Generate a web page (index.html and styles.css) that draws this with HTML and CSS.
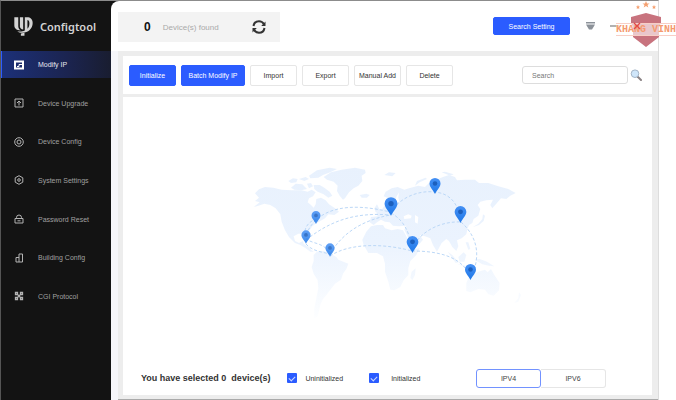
FILE: index.html
```html
<!DOCTYPE html>
<html lang="en">
<head>
    <meta charset="UTF-8">
    <meta name="viewport" content="width=device-width, initial-scale=1.0">
    <title>Configtool</title>
    <link rel="stylesheet" href="styles.css">
</head>
<body>
    <div class="window">
        <aside class="sidebar">
            <div class="brand">
                <svg class="brand-logo" viewBox="0 0 58 58" fill="#d4d4d4">
                    <path d="M1 1h12v27c0 6 3 10 8 13C8 41 1 35 1 26z"/>
                    <path d="M18 1h10v37c-6-1-10-4-10-10z"/>
                    <path d="M33 1h7c10 0 17 6 17 17 0 18-14 29-31 30-8 0-12-1-16-4 10 1 17 0 23-3zM41 36c4-4 6-10 6-17 0-6-2-9-6-10z"/>
                    <path d="M21 50l11-2v9H21z"/>
                </svg>
                <span>Configtool</span>
            </div>
            <nav class="menu">
                <a href="#" class="menu-item active">
                    <svg viewBox="0 0 10 10"><path d="M1 1.500h8v7H1z" stroke-width="2"/><path d="M3 6.500h2v-2h3"/></svg>
                    Modify IP
                </a>
                <a href="#" class="menu-item">
                    <svg viewBox="0 0 10 10"><path d="M1 1h8v8H1zM5 7.500V3M3 5l2-2 2 2"/></svg>
                    Device Upgrade
                </a>
                <a href="#" class="menu-item">
                    <svg viewBox="0 0 10 10"><circle cx="5" cy="5" r="4.300"/><circle cx="5" cy="5" r="2"/></svg>
                    Device Config
                </a>
                <a href="#" class="menu-item">
                    <svg viewBox="0 0 10 10"><path d="M5 .7l3.800 2.100v4.400L5 9.300 1.200 7.200V2.800z"/><circle cx="5" cy="5" r="1.300"/></svg>
                    System Settings
                </a>
                <a href="#" class="menu-item">
                    <svg viewBox="0 0 10 10"><path d="M1 4.500h8V9H1zM2.500 4.500V3.500a2.500 2.500 0 0 1 5 0v1M3.500 6.800h3"/></svg>
                    Password Reset
                </a>
                <a href="#" class="menu-item">
                    <svg viewBox="0 0 10 10"><path d="M5 9V1h3.500v8zM5 4.500H2V9h3"/></svg>
                    Building Config
                </a>
                <a href="#" class="menu-item">
                    <svg viewBox="0 0 10 10"><path d="M1.500 1.500h2v2h-2zM6.500 1.500h2v2h-2zM1.500 6.500h2v2h-2zM6.500 6.500h2v2h-2zM3.500 3.500l3 3M6.500 3.500l-3 3" stroke-width="1.300"/></svg>
                    CGI Protocol
                </a>
            </nav>
        </aside>

        <div class="main">
            <header class="topbar">
                <div class="found">
                    <strong>0</strong>
                    <span>Device(s) found</span>
                    <button class="icon-btn refresh" aria-label="Refresh">
                        <svg viewBox="0 0 14 14" fill="none" stroke="#333" stroke-width="2">
                            <path d="M1.500 6C2 3 4.500 1.300 7 1.300c2.200 0 4 1.200 5 3M12.500 8c-.5 3-3 4.700-5.500 4.700-2.200 0-4-1.200-5-3"/>
                            <path d="M13.500 1.500V6H9.200zM.5 12.500V8h4.300z" fill="#333" stroke="none"/>
                        </svg>
                    </button>
                </div>
                <button class="btn primary setting">Search Setting</button>
                <button class="icon-btn dropdown" aria-label="Menu">
                    <svg viewBox="0 0 9 8" fill="#8c9299"><path d="M0 0h9v1.500H0zM0 2.500h9L6 7.500H3z"/></svg>
                </button>
                <button class="icon-btn minimize" aria-label="Minimize">
                    <svg viewBox="0 0 9 8"><path d="M0 4h9" stroke="#999" stroke-width="1.500"/></svg>
                </button>
                <button class="icon-btn close" aria-label="Close">
                    <svg viewBox="0 0 8 8"><path d="M1 1l6 6M7 1L1 7" stroke="#555" stroke-width="1.200"/></svg>
                </button>
            </header>

            <div class="content">
                <div class="toolbar">
                    <button class="btn primary">Initialize</button>
                    <button class="btn primary wide">Batch Modify IP</button>
                    <button class="btn">Import</button>
                    <button class="btn">Export</button>
                    <button class="btn">Manual Add</button>
                    <button class="btn">Delete</button>
                    <input class="search" type="text" placeholder="Search" aria-label="Search">
                    <button class="icon-btn find" aria-label="Find">
                        <svg viewBox="0 0 12 12"><path d="M7.500 7.500l3.500 3.500" stroke="#8b8385" stroke-width="2" stroke-linecap="round"/><circle cx="5" cy="4.700" r="3.800" fill="#cfe6fa" stroke="#a3b4c6"/></svg>
                    </button>
                </div>

                <div class="panel">
                    <div class="map-wrap">
                        <svg class="map" viewBox="243 155 290 165">
                            <defs>
                                <linearGradient id="land" gradientUnits="userSpaceOnUse" x1="0" y1="30" x2="0" y2="495">
                                    <stop offset="0" stop-color="#e8f1fd"/>
                                    <stop offset=".5" stop-color="#ebf3fe"/>
                                    <stop offset="1" stop-color="#fdfeff"/>
                                </linearGradient>
                                <linearGradient id="pinFill" x1="0" y1="0" x2="0" y2="1">
                                    <stop offset="0" stop-color="#4590f4"/>
                                    <stop offset="1" stop-color="#1f78e8"/>
                                </linearGradient>
                                <symbol id="pin" viewBox="0 0 12 16">
                                    <path d="M6 0a5.500 5.500 0 0 1 5.500 5.500C11.500 9 8.500 11 6 16 3.500 11 .5 9 .5 5.500A5.500 5.500 0 0 1 6 0z" fill="url(#pinFill)"/>
                                    <circle cx="6" cy="5.500" r="2.300" fill="#1c5fbd"/>
                                </symbol>
                            </defs>
                            <g fill="url(#land)" transform="translate(245 155) scale(.3333)">
                                <!-- North America -->
                                <path d="M30 115L42 103 60 96 85 98 110 104 140 106 170 106 188 110 200 104 212 112 204 124 192 130 188 142 198 150 206 158 212 148 214 132 228 128 242 136 252 148 270 160 282 170 268 180 250 178 240 190 226 198 212 206 202 214 192 228 190 246 180 236 160 236 146 244 150 258 162 264 174 258 176 266 190 276 200 286 206 290 196 290 180 278 166 270 150 264 132 246 120 226 110 200 106 178 92 160 76 150 58 146 40 152 26 156 44 142 30 138 42 128z"/>
                                <path d="M130 78l14-8 14 2-4 10-16 2zM138 98l14-12 20 2 14 14-18 4-20-2zM162 72l20-6 10 6-14 6zM186 86l12-2 6 10-12 6zM192 62l24-16 38-8 22 4-20 10-22 8-14 8-24 2zM206 90l18 0 14 8 16 12 8 12-12 6-14-10-18-8-10-8z"/>
                                <!-- Greenland and Iceland -->
                                <path d="M236 66L258 52 290 44 330 38 360 44 362 54 350 62 352 78 340 92 326 100 312 112 300 130 294 134 284 122 276 108 278 92 266 80 246 74zM344 120l20-4 10 4-8 8-16 0z"/>
                                <!-- South America -->
                                <path d="M206 300L216 290 236 288 256 296 274 306 280 314 310 326 304 342 294 356 288 374 270 386 256 404 246 418 234 432 226 450 218 484 208 490 208 460 214 430 220 400 218 376 206 356 200 336 206 318z"/>
                                <!-- Africa -->
                                <path d="M356 270L352 254 364 230 378 214 396 210 414 210 420 220 440 226 458 222 474 226 484 244 496 268 508 282 524 280 514 300 496 318 490 340 490 360 476 376 466 396 448 406 436 404 430 380 420 350 420 326 414 304 396 294 370 294zM500 350l12-10-2 20-8 16-6-8z"/>
                                <!-- Europe and Asia -->
                                <path d="M374 202L378 186 398 184 394 172 412 162 420 150 440 140 446 128 430 130 416 124 422 110 440 100 458 96 478 104 492 100 520 92 540 96 552 84 570 76 594 66 612 60 630 66 636 76 660 74 690 74 702 84 730 84 760 94 790 102 812 114 796 122 784 132 768 130 754 146 742 160 736 150 744 134 724 136 706 140 698 150 706 162 700 182 686 192 682 204 672 210 668 220 664 238 650 250 636 256 640 274 634 288 622 276 612 258 604 252 590 264 576 290 564 270 556 250 540 244 524 240 534 254 524 266 506 276 496 262 484 236 478 224 484 212 462 214 444 212 434 202 420 200 408 194 396 202 386 210z"/>
                                <path d="M388 160l8-12 4 8 6 12-14 4zM418 60l14-8 20 2-10 10zM510 92l6-14 26-10 4 4-22 10zM590 52l10-2 26 8-10 4zM684 216l16-10 12-14 2-14 6 4-4 16-14 12z"/>
                                <!-- South-east Asia and Australia -->
                                <path d="M608 290l14 10 18 22-8 2zM640 306l16-14 8 8-6 20-14 0zM662 262l8 0 6 20-6 2zM636 326l26 6-2 4zM688 314l16-2 22 8 22 14-16-2-20-4z"/>
                                <path d="M664 384L672 366 700 350 720 344 728 352 738 342 748 360 764 384 762 406 746 422 730 418 720 404 700 402 676 412 664 408zM808 444l12-14 2-18 6 8-8 20z"/>
                                <!-- inland seas -->
                                <path d="M476 184l14-6 10 4-2 8-20 2zM510 180l10 6-2 20-8-4zM462 112l-8 14-2 14 12 2-4-14z" fill="#fff"/>
                            </g>
                            <g class="routes">
                                <path d="M306 235C317 207 350 202 390 212"/>
                                <path d="M306 240C330 221 355 212 390 215"/>
                                <path d="M317 219C304 222 302 236 308 240S325 243 330 254"/>
                                <path d="M306 244C312 251 322 252 330 254"/>
                                <path d="M330 254C342 234 360 221 390 215"/>
                                <path d="M330 256C351 242 387 244 412 251"/>
                                <path d="M391 213C398 198 419 190 434 192C449 193 458 202 461 221"/>
                                <path d="M391 213C400 218 409 227 412 249"/>
                                <path d="M412 249C421 229 444 221 461 222"/>
                                <path d="M412 251C435 251 461 255 470 276"/>
                                <path d="M461 222C478 237 481 257 471 277"/>
                            </g>
                            <use href="#pin" x="384" y="197" width="14" height="19"/>
                            <use href="#pin" x="429" y="178" width="12" height="16"/>
                            <use href="#pin" x="454" y="206" width="13" height="17"/>
                            <use href="#pin" x="406" y="236" width="13" height="17"/>
                            <use href="#pin" x="464" y="264" width="13" height="16"/>
                            <g opacity=".85">
                                <use href="#pin" x="311" y="211" width="10" height="13"/>
                                <use href="#pin" x="301" y="230" width="10" height="14"/>
                                <use href="#pin" x="325" y="243" width="10" height="14"/>
                            </g>
                        </svg>
                    </div>

                    <footer class="statusbar">
                        <strong class="selected">You have selected 0&nbsp; device(s)</strong>
                        <label class="check"><input type="checkbox" checked>Uninitialized</label>
                        <label class="check second"><input type="checkbox" checked>Initialized</label>
                        <div class="tabs">
                            <button class="tab active">IPV4</button>
                            <button class="tab">IPV6</button>
                        </div>
                    </footer>
                </div>
            </div>
        </div>
    </div>

    <div class="stamp">
        <svg class="stamp-shield" viewBox="0 0 60 48">
            <path d="M15 17l15-4 15 4v6l-2 4v10L30 47 17 37V27l-2-4z" fill="#c8737e"/>
            <path d="M30 1l1 2.500h2.500l-2 1.500.8 2.500L30 6l-2.300 1.500.8-2.500-2-1.500H29zM22 5l.7 1.500H24L23 7.500l.3 1.500L22 8.200 20.700 9l.3-1.500-1-1h1.300zM38 5l.7 1.500H40L39 7.500l.3 1.500-1.300-.8-1.300.8.3-1.500-1-1h1.300z" fill="#f5a070"/>
        </svg>
        <span class="stamp-text">KHANG VINH</span>
        <svg class="stamp-cross" viewBox="0 0 8 8"><path d="M1 1l6 6M7 1L1 7" stroke="#e34848" stroke-width="1.300"/></svg>
    </div>
</body>
</html>
```
FILE: styles.css
```css
* {
    box-sizing: border-box;
}
body {
    margin: 0;
    background: #fff;
    font-family: "Liberation Sans", Arial, sans-serif;
    font-size: 7px;
    color: #333;
}
button, input {
    font-family: inherit;
    font-size: inherit;
    margin: 0;
}
svg {
    display: block;
}
.window {
    display: flex;
    height: 100vh;
    margin-right: 17px;
    background: #131313;
    border-top: 1px solid #8c8c8c;
    border-left: 1px solid #555;
    border-right: 1px solid #ddd;
}

/* sidebar */
.sidebar {
    width: 110px;
    flex-shrink: 0;
    display: flex;
    flex-direction: column;
    color: #a0a0a0;
}
.brand {
    height: 50px;
    display: flex;
    align-items: center;
    gap: 7px;
    padding-left: 13px;
    font-family: "Noto Sans", sans-serif;
    font-size: 11px;
    font-weight: 600;
    color: #d4d4d4;
}
.brand-logo {
    width: 19px;
    height: 19px;
}
.menu {
    flex: 1;
    display: flex;
    flex-direction: column;
    justify-content: space-between;
    margin-bottom: 90px;
}
.menu-item {
    height: 27px;
    display: flex;
    align-items: center;
    gap: 14px;
    padding-left: 13px;
    color: inherit;
    text-decoration: none;
}
.menu-item svg {
    width: 10px;
    height: 10px;
    fill: none;
    stroke: #b4b4b4;
}
.menu-item.active {
    background: linear-gradient(90deg, #1c3078, #1b2450 60%, #191d30);
    border-left: 1px solid #2c5cff;
    padding-left: 12px;
    color: #e4e6f0;
}
.menu-item.active svg {
    stroke: #fff;
}

/* header */
.main {
    flex: 1;
    display: flex;
    flex-direction: column;
    background: #fff;
    border-top-left-radius: 8px;
}
.topbar {
    height: 50px;
    display: flex;
    align-items: center;
    padding: 0 16px 0 7px;
}
.found {
    width: 162px;
    height: 30px;
    display: flex;
    align-items: center;
    padding: 0 14px 0 26px;
    background: #f3f3f3;
    margin-top: 2px;
    margin-right: auto;
    font-size: 8px;
    color: #aaa;
}
.found strong {
    font-size: 12px;
    color: #111;
    margin-right: 12px;
}
.refresh {
    margin-left: auto;
}
.icon-btn {
    border: 0;
    padding: 0;
    background: none;
    cursor: pointer;
}
.refresh svg {
    width: 14px;
    height: 14px;
}
.dropdown svg, .minimize svg {
    width: 9px;
    height: 8px;
}
.close svg {
    width: 8px;
    height: 8px;
}
.dropdown {
    margin: 0 15px 0 16px;
}
.minimize {
    margin-right: 15px;
}
.btn {
    width: 47px;
    height: 21px;
    padding: 0;
    border: 1px solid #e6e6e6;
    border-radius: 2px;
    background: #fff;
    color: #333;
    white-space: nowrap;
    cursor: pointer;
}
.btn.primary {
    border-color: #2b5cff;
    background: #2b5cff;
    color: #fff;
}
.btn.wide {
    width: 64px;
}
.btn.setting {
    width: 77px;
    height: 18px;
}

/* content */
.content {
    flex: 1;
    display: flex;
    flex-direction: column;
    gap: 3px;
    margin-left: 7px;
    padding: 5px 6px 4px 5px;
    background: #ededed;
    border-bottom: 1px solid #aaa;
    box-shadow: -7px 0 #f6f6fa;
}
.toolbar {
    height: 38px;
    display: flex;
    align-items: center;
    gap: 5px;
    padding: 0 10px 0 6px;
    background: #fff;
}
.search {
    width: 106px;
    height: 18px;
    margin-left: auto;
    padding: 0 9px;
    border: 1px solid #ddd;
    border-radius: 3px;
}
.search::placeholder {
    color: #777;
}
.find {
    margin-left: -3px;
}
.find svg {
    width: 12px;
    height: 12px;
}
.panel {
    flex: 1;
    display: flex;
    flex-direction: column;
    background: #fff;
}
.map-wrap {
    flex: 1;
    display: flex;
    justify-content: center;
    padding-top: 58px;
}
.map {
    width: 290px;
    height: 165px;
}
.routes {
    fill: none;
    stroke: #bcd8f7;
    stroke-width: 1;
    stroke-dasharray: 3 2;
}

/* footer */
.statusbar {
    height: 34px;
    display: flex;
    align-items: center;
    padding: 0 46px 0 18px;
}
.selected {
    font-size: 9px;
    margin-right: 17px;
}
.check {
    display: flex;
    align-items: center;
    gap: 8px;
}
.check.second {
    gap: 12px;
    margin-left: 26px;
}
.check input {
    appearance: none;
    width: 10px;
    height: 10px;
    border-radius: 1px;
    background: #2b5cff;
    display: grid;
    place-items: center;
}
.check input:checked::before {
    content: "";
    width: 5px;
    height: 3px;
    border-left: 1px solid #cdd9ff;
    border-bottom: 1px solid #cdd9ff;
    transform: rotate(-45deg);
}
.tabs {
    display: flex;
    margin-left: auto;
}
.tab {
    width: 65px;
    height: 19px;
    border: 1px solid #e6e6e6;
    border-left: 0;
    border-radius: 0 3px 3px 0;
    background: #fff;
    color: #444;
    cursor: pointer;
}
.tab.active {
    border: 1px solid #7292ff;
    border-radius: 3px;
}

/* stamp over the top right corner */
.stamp {
    position: absolute;
    top: 0;
    right: 0;
    width: 60px;
    height: 48px;
    pointer-events: none;
}
.stamp-shield {
    width: 60px;
    height: 48px;
}
.stamp-text {
    position: absolute;
    top: 23px;
    left: 0;
    right: 0;
    height: 13px;
    line-height: 11px;
    border: 1px solid #f8cfc6;
    border-width: 1px 0;
    background: rgba(255, 255, 255, 0.6);
    font-family: "Liberation Mono", monospace;
    font-size: 10px;
    font-weight: bold;
    text-align: center;
    white-space: nowrap;
    color: #f59a70;
}
.stamp-cross {
    position: absolute;
    top: 22px;
    left: 17px;
    width: 8px;
    height: 8px;
}
```
